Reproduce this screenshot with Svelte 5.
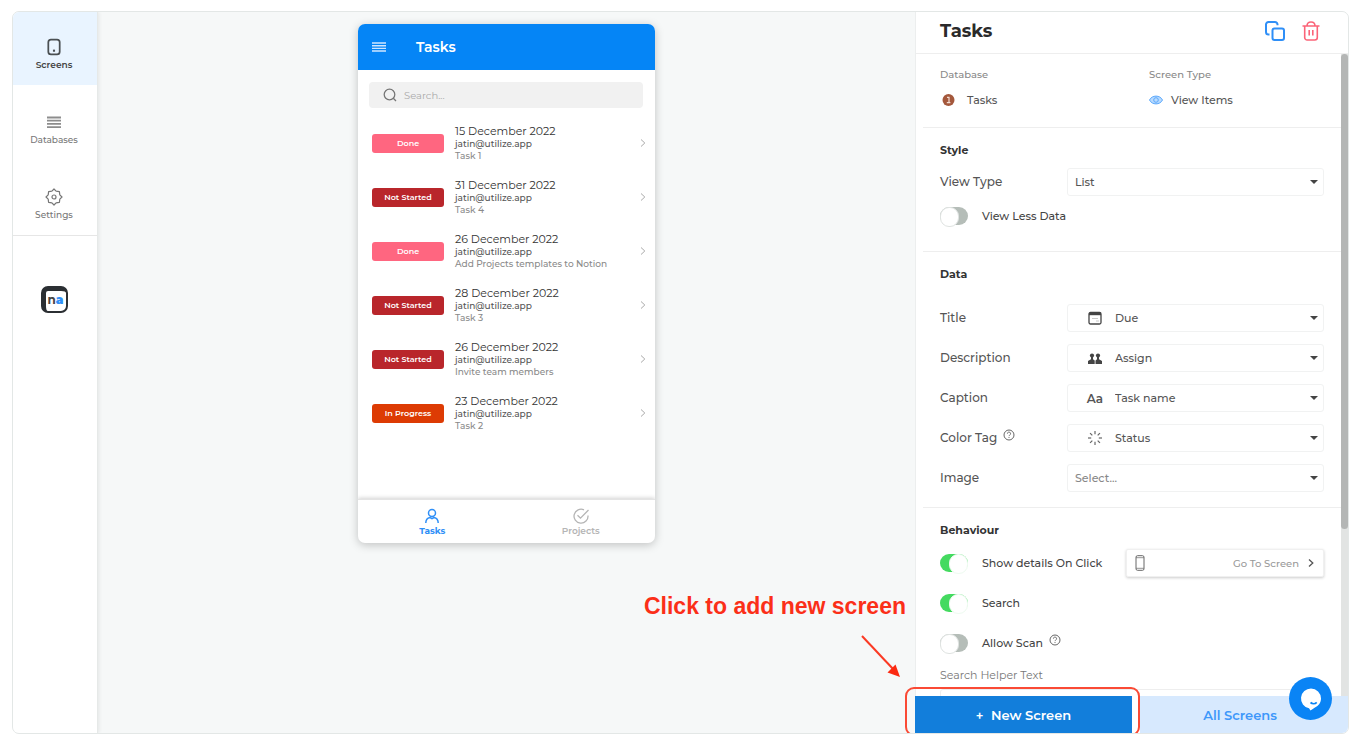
<script>
  const tasks = [
    { status: 'Done', date: '15 December 2022', assign: 'jatin@utilize.app', name: 'Task 1' },
    { status: 'Not Started', date: '31 December 2022', assign: 'jatin@utilize.app', name: 'Task 4' },
    { status: 'Done', date: '26 December 2022', assign: 'jatin@utilize.app', name: 'Add Projects templates to Notion' },
    { status: 'Not Started', date: '28 December 2022', assign: 'jatin@utilize.app', name: 'Task 3' },
    { status: 'Not Started', date: '26 December 2022', assign: 'jatin@utilize.app', name: 'Invite team members' },
    { status: 'In Progress', date: '23 December 2022', assign: 'jatin@utilize.app', name: 'Task 2' }
  ];

  const fields = [
    { id: 'title', label: 'Title', icon: 'date', value: 'Due' },
    { id: 'description', label: 'Description', icon: 'people', value: 'Assign' },
    { id: 'caption', label: 'Caption', icon: 'text', value: 'Task name' },
    { id: 'color-tag', label: 'Color Tag', icon: 'status', value: 'Status', help: true },
    { id: 'image', label: 'Image', icon: null, value: 'Select...' }
  ];

  const spokes = [0, 45, 90, 135, 180, 225, 270, 315];

  let viewLess = $state(false);
  let showDetails = $state(true);
  let search = $state(true);
  let allowScan = $state(false);
</script>

{#snippet help()}
  <svg class="help" viewBox="0 0 12 12" width="12" height="12" aria-hidden="true">
    <circle cx="6" cy="6" r="5" fill="none" stroke="#666" />
    <path d="M4.4 4.7a1.6 1.6 0 1 1 2.3 1.4c-.5.3-.7.5-.7 1M6 8v1" fill="none" stroke="#666" stroke-width=".9" />
  </svg>
{/snippet}

<div class="page">
  <div class="frame">
    <nav class="sidebar">
      <a href="#screens" class="side-item active">
        <svg viewBox="0 0 16 20" width="14" height="18">
          <rect x="1.5" y="1.5" width="13" height="17" rx="3" fill="none" stroke="#4a4f52" stroke-width="2" />
          <rect x="6.800" y="13" width="2.4" height="2.4" fill="#4a4f52" />
        </svg>
        <span>Screens</span>
      </a>
      <a href="#databases" class="side-item">
        <svg viewBox="0 0 14 12" width="14" height="18">
          <path d="M0 1.500h14M0 4.700h14M0 7.900h14M0 11.100h14" stroke="#8d8d8d" stroke-width="1.800" />
        </svg>
        <span>Databases</span>
      </a>
      <a href="#settings" class="side-item">
        <svg viewBox="0 0 18 18" width="18" height="18" fill="none" stroke="#777" stroke-width="1.200" stroke-linejoin="round">
          <path d="M9 1L11.100 3.200 14.400 3.600 14.800 6.900 17 9 14.800 11.100 14.400 14.400 11.100 14.800 9 17 6.900 14.800 3.600 14.400 3.200 11.100 1 9 3.200 6.900 3.600 3.600 6.900 3.200z" />
          <circle cx="9" cy="9" r="2" />
        </svg>
        <span>Settings</span>
      </a>
      <div class="side-app">
        <div class="app-logo"><span>n</span><b>a</b></div>
      </div>
    </nav>

    <main class="canvas">
      <div class="phone">
        <header class="phone-head">
          <button class="plain" aria-label="Menu">
            <svg viewBox="0 0 14 10" width="14" height="10">
              <path d="M0 1h14M0 3.700h14M0 6.400h14M0 9h14" stroke="#cfe6ff" stroke-width="1.400" />
            </svg>
          </button>
          <h2>Tasks</h2>
        </header>

        <div class="phone-body">
          <label class="search">
            <svg viewBox="0 0 14 14" width="14" height="14" fill="none" stroke="#777" stroke-width="1.300">
              <circle cx="6.500" cy="6.500" r="5.300" />
              <path d="M10.300 10.300l2.700 2.700" />
            </svg>
            <input type="text" placeholder="Search..." aria-label="Search tasks" />
          </label>

          <ul class="tasks">
            {#each tasks as task}
              <li>
                <span
                  class="tag"
                  class:done={task.status === 'Done'}
                  class:not-started={task.status === 'Not Started'}
                  class:in-progress={task.status === 'In Progress'}
                >{task.status}</span>
                <div class="task-info">
                  <p class="date">{task.date}</p>
                  <p class="assign">{task.assign}</p>
                  <p class="name">{task.name}</p>
                </div>
                <svg viewBox="0 0 6 10" width="6" height="10">
                  <path d="M1 1.500L4.800 5 1 8.500" fill="none" stroke="#aaa" />
                </svg>
              </li>
            {/each}
          </ul>
        </div>

        <footer class="phone-tabs">
          <a href="#tasks" class="tab current">
            <svg viewBox="0 0 16 16" width="16" height="16" fill="none" stroke="currentColor" stroke-width="1.500">
              <circle cx="8" cy="5" r="3.500" />
              <path d="M1.800 15c0-3.200 2-5 4.200-5.500l2 1.200 2-1.200c2.200.5 4.200 2.300 4.200 5.500" />
            </svg>
            Tasks
          </a>
          <a href="#projects" class="tab">
            <svg viewBox="0 0 18 16" width="18" height="16" fill="none" stroke="currentColor" stroke-width="1.300">
              <path d="M16 7.500A7 7 0 1 1 12 1.800" />
              <path d="M5.500 7.200l3 3L16.500 2" />
            </svg>
            Projects
          </a>
        </footer>
      </div>
    </main>

    <aside class="panel">
      <header class="panel-head">
        <h1>Tasks</h1>
        <button class="plain" aria-label="Duplicate screen">
          <svg viewBox="0 0 20 20" width="20" height="20" fill="none" stroke="#2f8ff7" stroke-width="2">
            <rect x="7.500" y="7.500" width="11.500" height="11.500" rx="2" />
            <path d="M4.500 13.500H3.500a2.500 2.500 0 0 1-2.500-2.500V3.500A2.500 2.500 0 0 1 3.500 1H10a2.500 2.500 0 0 1 2.500 2.500v.8" />
          </svg>
        </button>
        <button class="plain" aria-label="Delete screen">
          <svg viewBox="0 0 18 20" width="18" height="20" fill="none" stroke="#fb6478" stroke-width="1.600">
            <path d="M.5 5h17M5 5c0-2.500 1.500-4 4-4s4 1.500 4 4M2.700 5v11.500a2.500 2.500 0 0 0 2.500 2.500h7.600a2.500 2.500 0 0 0 2.500-2.500V5M7.200 9v5.500M10.800 9v5.500" />
          </svg>
        </button>
      </header>

      <div class="panel-main">
        <div class="panel-scroll">
          <section class="source">
            <div>
              <p class="hint">Database</p>
              <p class="source-value">
                <svg class="coin" viewBox="0 0 12 12" width="13" height="12">
                  <circle cx="6" cy="6" r="6" fill="#a4583c" />
                  <path d="M4.500 3.300h2v5.200M4.300 8.700h3.600" fill="none" stroke="#f3ddd3" stroke-width="1.200" />
                </svg>
                Tasks
              </p>
            </div>
            <div>
              <p class="hint">Screen Type</p>
              <p class="source-value">
                <svg class="eye" viewBox="0 0 14 10" width="14" height="10">
                  <path d="M.5 5C3-.2 11-.2 13.500 5 11 10.200 3 10.200.5 5z" fill="#b9dbff" stroke="#5ba8fb" />
                  <circle cx="7" cy="5" r="2.300" fill="none" stroke="#5ba8fb" />
                </svg>
                View Items
              </p>
            </div>
          </section>

          <section class="style">
            <h3>Style</h3>
            <div class="field">
              <label for="view-type">View Type</label>
              <div class="select">
                <select id="view-type"><option>List</option></select>
              </div>
            </div>
            <label class="toggle">
              <input type="checkbox" bind:checked={viewLess} />
              <span>View Less Data</span>
            </label>
          </section>

          <section class="data">
            <h3>Data</h3>
            {#each fields as field}
              <div class="field">
                <label for={field.id}>
                  {field.label}
                  {#if field.help}{@render help()}{/if}
                </label>
                <div class="select" class:empty={!field.icon}>
                  {#if field.icon}
                    <span class="field-icon">
                      {#if field.icon === 'date'}
                        <svg viewBox="0 0 14 14" width="14" height="14">
                          <rect x="1" y="1.500" width="12" height="11.500" rx="1.500" fill="none" stroke="#444" stroke-width="1.300" />
                          <path d="M1 3h12" stroke="#444" stroke-width="2.400" />
                          <path d="M8 10h3M4 7.500h6" stroke="#bbb" stroke-width=".8" />
                        </svg>
                      {:else if field.icon === 'people'}
                        <svg viewBox="0 0 14 11" width="14" height="11" fill="#444">
                          <circle cx="4" cy="2.600" r="2.100" />
                          <circle cx="10" cy="2.600" r="2.100" />
                          <path d="M3 4h2v2.300l1.700 1.200V11H0V8l3-1.700zM9 4h2v2.300L14 8v3H7.500V7.500L9 6.300z" />
                        </svg>
                      {:else if field.icon === 'text'}
                        <span class="aa">Aa</span>
                      {:else}
                        <svg viewBox="0 0 14 14" width="14" height="14" stroke="#666" stroke-width="1.200">
                          {#each spokes as angle}
                            <path d="M7 0v3.200" transform="rotate({angle} 7 7)" />
                          {/each}
                        </svg>
                      {/if}
                    </span>
                  {/if}
                  <select id={field.id}><option>{field.value}</option></select>
                </div>
              </div>
            {/each}
          </section>

          <section class="behaviour">
            <h3>Behaviour</h3>
            <div class="toggle-row">
              <label class="toggle">
                <input type="checkbox" bind:checked={showDetails} />
                <span>Show details On Click</span>
              </label>
              <button class="goto">
                <svg viewBox="0 0 10 16" width="10" height="16" fill="none" stroke="#666">
                  <rect x="1" y=".7" width="8" height="14.600" rx="1.500" />
                  <path d="M1 2.700h8M1 13.300h8" stroke-width=".7" />
                </svg>
                <span>Go To Screen</span>
                <svg viewBox="0 0 6 10" width="6" height="10">
                  <path d="M1 1.500L4.800 5 1 8.500" fill="none" stroke="#555" stroke-width="1.300" />
                </svg>
              </button>
            </div>
            <div class="toggle-row">
              <label class="toggle">
                <input type="checkbox" bind:checked={search} />
                <span>Search</span>
              </label>
            </div>
            <div class="toggle-row">
              <label class="toggle">
                <input type="checkbox" bind:checked={allowScan} />
                <span>Allow Scan {@render help()}</span>
              </label>
            </div>
            <label class="helper-label" for="helper-text">Search Helper Text</label>
            <input class="helper-input" id="helper-text" type="text" />
          </section>
        </div>
        <div class="track"><div class="thumb"></div></div>
      </div>

      <footer class="panel-foot">
        <div class="new-wrap">
          <button class="new-screen"><span class="plus">+</span> New Screen</button>
        </div>
        <button class="all-screens">All Screens</button>
      </footer>

      <div class="callout">
        <p>Click to add new screen</p>
        <svg viewBox="0 0 40 44" width="40" height="44">
          <path d="M1 1l32 34" stroke="#fb3a24" stroke-width="2" />
          <path d="M39 42l-12.500-4.500 8-8z" fill="#fb2a12" />
        </svg>
      </div>

      <button class="chat" aria-label="Open chat">
        <svg viewBox="0 0 24 24" width="24" height="24">
          <path d="M12 1.500a10 10 0 0 1 10 10c0 4-2.500 7.500-6 9l-4.500 3-1.500-2.200A10 10 0 0 1 12 1.500z" fill="#fff" />
          <path d="M11.500 15.500c1.800 1.600 4.500 1.600 6.200-.2" fill="none" stroke="#0a84f5" stroke-width="1.800" />
        </svg>
      </button>
    </aside>
  </div>
</div>

<style>
  :global(body) {
    margin: 0;
    background: #fff;
  }

  .page {
    box-sizing: border-box;
    height: 100vh;
    padding: 11px 17px 14px 12px;
    font-family: Montserrat, Inter, 'Open Sans', sans-serif;
    color: #444;
  }

  .page * {
    box-sizing: border-box;
  }

  h1, h2, h3, p, ul {
    margin: 0;
    padding: 0;
  }

  button, input, select {
    font-family: inherit;
    color: inherit;
  }

  svg {
    display: block;
    flex: none;
  }

  a {
    text-decoration: none;
    color: inherit;
  }

  .plain {
    border: 0;
    padding: 0;
    background: none;
  }

  .frame {
    display: flex;
    height: 100%;
    border: 1px solid #e3e7e6;
    border-radius: 7px;
    overflow: hidden;
    background: #f6f8f8;
  }

  /* sidebar */
  .sidebar {
    flex: 0 0 85px;
    background: #fff;
    border-right: 1px solid #e6e9e8;
    box-shadow: 1px 0 4px rgba(0, 0, 0, 0.08);
  }

  .side-item {
    display: flex;
    flex-direction: column;
    align-items: center;
    gap: 3px;
    height: 75px;
    padding: 28px 2px 0 0;
    font-size: 9px;
    line-height: 12px;
    font-weight: 500;
    color: #777;
  }

  .side-item.active {
    height: 73px;
    padding-top: 26px;
    background: #e9f4ff;
    color: #444;
    font-weight: 600;
  }

  .side-app {
    display: flex;
    justify-content: center;
    padding: 50px 2px 0 0;
    border-top: 1px solid #e6e6e6;
  }

  .app-logo {
    display: flex;
    justify-content: center;
    width: 27px;
    height: 27px;
    border: solid #2b2f33;
    border-width: 5px 2px 2px 5px;
    border-radius: 7px;
    background: #fff;
    font-size: 12px;
    line-height: 18px;
    font-weight: 700;
    color: #444;
  }

  .app-logo b {
    color: #2f8ff7;
  }

  /* phone preview */
  .canvas {
    flex: 1;
    min-width: 0;
    display: flex;
    justify-content: center;
    align-items: flex-start;
    padding-top: 12px;
  }

  .phone {
    display: flex;
    flex-direction: column;
    width: 297px;
    min-height: 519px;
    border-radius: 7px;
    overflow: hidden;
    background: #fff;
    box-shadow: 0 2px 10px rgba(0, 0, 0, 0.22);
  }

  .phone-head {
    display: flex;
    align-items: center;
    gap: 30px;
    height: 46px;
    padding: 0 14px;
    background: #0585f6;
    color: #fff;
  }

  .phone-head h2 {
    font-size: 14px;
    line-height: 18px;
    font-weight: 600;
  }

  .phone-body {
    flex: 1;
    padding: 12px 9px 0 11px;
  }

  .search {
    display: flex;
    align-items: center;
    gap: 7px;
    height: 26px;
    margin: 0 3px 8px 0;
    padding: 0 14px;
    border-radius: 4px;
    background: #f1f1f1;
  }

  .search input {
    flex: 1;
    min-width: 0;
    border: 0;
    padding: 0;
    background: none;
    font-size: 10px;
  }

  .search input::placeholder {
    color: #aaa;
  }

  .tasks {
    list-style: none;
  }

  .tasks li {
    display: flex;
    align-items: center;
    height: 54px;
    padding-left: 3px;
  }

  .tag {
    width: 72px;
    margin-right: 11px;
    border-radius: 3px;
    font-size: 8px;
    line-height: 19px;
    font-weight: 600;
    text-align: center;
    color: #fff;
  }

  .tag.done {
    background: #ff6680;
  }

  .tag.not-started {
    background: #b9262b;
  }

  .tag.in-progress {
    background: #dd3b04;
  }

  .task-info {
    flex: 1;
    line-height: 12px;
  }

  .date {
    font-size: 11px;
    line-height: 14px;
    color: #333;
  }

  .assign {
    font-size: 9px;
    font-weight: 500;
    color: #555;
  }

  .name {
    font-size: 9px;
    font-weight: 500;
    color: #8a8a8a;
  }

  .phone-tabs {
    display: flex;
    height: 44px;
    border-top: 1px solid #e4e4e4;
    box-shadow: 0 -1px 4px rgba(0, 0, 0, 0.18);
  }

  .tab {
    flex: 1;
    display: flex;
    flex-direction: column;
    align-items: center;
    padding-top: 8px;
    font-size: 9px;
    line-height: 14px;
    font-weight: 600;
    color: #b5b5b5;
  }

  .tab.current {
    color: #2f8ff7;
    font-weight: 700;
  }

  /* settings panel */
  .panel {
    position: relative;
    flex: 0 0 433px;
    display: flex;
    flex-direction: column;
    background: #fff;
    border-left: 1px solid #eceeee;
  }

  .panel-head {
    display: flex;
    align-items: center;
    gap: 17px;
    height: 42px;
    padding: 0 28px 4px 24px;
    border-bottom: 1px solid #eee;
  }

  .panel-head h1 {
    flex: 1;
    font-size: 18px;
    line-height: 24px;
    font-weight: 700;
    color: #2a2a2a;
  }

  .panel-main {
    flex: 1;
    min-height: 0;
    display: flex;
  }

  .panel-scroll {
    flex: 1;
    min-width: 0;
    overflow-y: auto;
    scrollbar-width: none;
    padding-left: 7px;
  }

  .track {
    flex: 0 0 7px;
    background: #e2e4e3;
  }

  .thumb {
    height: 74%;
    border-radius: 4px;
    background: #b4b6b5;
  }

  section {
    padding: 12px 17px 0 17px;
    border-bottom: 1px solid #eee;
  }

  .source {
    display: grid;
    grid-template-columns: 209px 1fr;
    height: 74px;
    padding-top: 13px;
  }

  .hint {
    font-size: 10px;
    line-height: 16px;
    font-weight: 500;
    color: #888;
  }

  .source-value {
    display: flex;
    align-items: center;
    gap: 8px;
    margin-top: 8px;
    font-size: 11px;
    line-height: 18px;
    font-weight: 500;
    color: #555;
  }

  .coin {
    margin: 0 4px 0 2px;
  }

  h3 {
    font-size: 11px;
    line-height: 20px;
    font-weight: 700;
    color: #333;
  }

  .style {
    height: 124px;
  }

  .style .field {
    margin-top: 8px;
  }

  .style .toggle {
    margin-top: 11px;
  }

  .data {
    height: 256px;
  }

  .data .field {
    margin-bottom: 12px;
  }

  .data h3 {
    margin-bottom: 20px;
  }

  .field {
    display: flex;
    align-items: center;
  }

  .field label {
    display: flex;
    gap: 6px;
    flex: 0 0 127px;
    font-size: 12px;
    line-height: 18px;
    font-weight: 500;
    color: #555;
  }

  .select {
    position: relative;
    flex: 1;
    display: flex;
    align-items: center;
    height: 28px;
    padding-left: 7px;
    border: 1px solid #f1f2f2;
    border-radius: 3px;
  }

  .select::after {
    content: '';
    position: absolute;
    right: 5px;
    top: 11px;
    border: 4px solid transparent;
    border-top-color: #444;
    border-bottom: 0;
    pointer-events: none;
  }

  .select select {
    flex: 1;
    height: 26px;
    border: 0;
    padding: 0;
    appearance: none;
    background: none;
    font-size: 11px;
    font-weight: 500;
    color: #555;
  }

  .select.empty select {
    color: #888;
  }

  .field-icon {
    display: flex;
    justify-content: center;
    width: 40px;
  }

  .aa {
    font-size: 12px;
    font-weight: 600;
    color: #555;
  }

  .toggle {
    display: flex;
    align-items: center;
    gap: 14px;
    font-size: 11px;
    line-height: 18px;
    font-weight: 500;
    color: #444;
  }

  .toggle span {
    display: flex;
    gap: 6px;
  }

  .toggle input {
    appearance: none;
    display: flex;
    width: 28px;
    height: 18px;
    margin: 0;
    border-radius: 9px;
    background: #b5bdb8;
  }

  .toggle input::before {
    content: '';
    width: 17px;
    height: 18px;
    border: 1px solid #dfe3e1;
    border-radius: 9px;
    background: #fff;
  }

  .toggle input:checked {
    justify-content: flex-end;
    background: #44da60;
  }

  .toggle input:checked::before {
    border-color: #eefbf0;
  }

  .behaviour {
    border: 0;
  }

  .behaviour h3 {
    margin-bottom: 3px;
  }

  .toggle-row {
    display: flex;
    align-items: center;
    justify-content: space-between;
    height: 40px;
  }

  .goto {
    display: flex;
    align-items: center;
    gap: 9px;
    width: 198px;
    height: 28px;
    padding: 0 9px 0 8px;
    border: 1px solid #f0f0f0;
    border-radius: 2px;
    background: #fff;
    box-shadow: 0 1px 3px rgba(0, 0, 0, 0.2);
    font-size: 10px;
    font-weight: 500;
    color: #999;
  }

  .goto span {
    flex: 1;
    text-align: right;
  }

  .helper-label {
    display: block;
    margin-top: 4px;
    font-size: 11px;
    line-height: 16px;
    color: #777;
  }

  .helper-input {
    width: 100%;
    height: 28px;
    margin-top: 6px;
    border: 1px solid #eee;
    border-radius: 3px;
  }

  .panel-foot {
    display: flex;
    height: 37px;
    margin-left: -1px;
  }

  .panel-foot button {
    border: 0;
    border-radius: 0;
    font-size: 13px;
    font-weight: 600;
  }

  .new-wrap {
    position: relative;
    flex: 1;
    display: flex;
    padding-right: 8px;
    background: #fff;
  }

  /* red ring around the button, its lower edge is cut off by the frame */
  .new-wrap::after {
    content: '';
    position: absolute;
    inset: -9px 0 -3px -10px;
    border: 2px solid #fa4a35;
    border-radius: 9px;
    pointer-events: none;
  }

  .new-screen {
    flex: 1;
    background: #127edb;
    color: #fff;
  }

  .plus {
    margin-right: 4px;
  }

  .all-screens {
    flex: 0 0 208px;
    padding: 0 8px 0 0;
    background: #d7e9fe;
    color: #3d97fa;
  }

  .callout {
    position: absolute;
    right: 100%;
    bottom: 54px;
    margin-right: 10px;
    display: flex;
    flex-direction: column;
    align-items: flex-end;
    gap: 15px;
    white-space: nowrap;
    font-family: 'Liberation Sans', Arial, sans-serif;
    font-size: 23px;
    line-height: 28px;
    font-weight: 700;
    color: #fb2f18;
  }

  .callout svg {
    margin-right: 5px;
  }

  .chat {
    position: absolute;
    right: 16px;
    bottom: 13px;
    display: flex;
    align-items: center;
    justify-content: center;
    width: 43px;
    height: 43px;
    padding: 0;
    border: 0;
    border-radius: 50%;
    background: #0a84f5;
  }
</style>
